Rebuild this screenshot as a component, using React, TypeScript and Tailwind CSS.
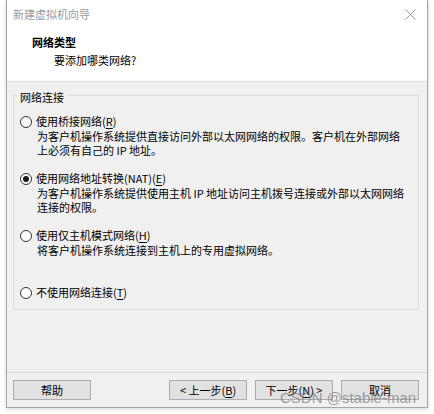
const font = { fontFamily: '"Noto Sans CJK SC", "Noto Sans", sans-serif' }

function Radio({ checked }: { checked?: boolean }) {
  return (
    <span className="flex h-[12px] w-[12px] shrink-0 items-center justify-center rounded-full border border-[#333] bg-white">
      {checked && <span className="h-[6px] w-[6px] rounded-full bg-[#1a1a1a]" />}
    </span>
  )
}

function Option({
  label,
  keyChar,
  prefix = '',
  checked,
  desc,
  className = '',
}: {
  label: string
  keyChar: string
  prefix?: string
  checked?: boolean
  desc?: string[]
  className?: string
}) {
  return (
    <div className={className}>
      <div className="flex h-[15px] items-center pl-[6px]">
        <Radio checked={checked} />
        <span className="ml-[4px] leading-[15px]">
          {label}
          {prefix}(<span className="underline underline-offset-2">{keyChar}</span>)
        </span>
      </div>
      {desc && (
        <div className="pl-[23px] leading-[14px]">
          {desc.map((d) => (
            <div key={d}>{d}</div>
          ))}
        </div>
      )}
    </div>
  )
}

function Button({ children }: { children: React.ReactNode }) {
  return (
    <button className="flex h-[20px] w-[78px] items-center justify-center border border-[#adadad] bg-[#e1e1e1] text-[11px] leading-none text-black">
      {children}
    </button>
  )
}

export default function App() {
  return (
    <div className="relative h-[414px] w-[434px] overflow-hidden bg-white text-[11px] text-black" style={font}>
      <div className="ml-[6px] flex h-[408px] w-[422px] flex-col border-x border-b border-[#a6a6a6] shadow-[0_1px_4px_rgba(0,0,0,0.18)]">
        {/* header */}
        <div className="h-[82px] border-b border-[#dcdcdc] bg-white">
          <div className="flex h-[22px] items-start justify-between pl-[6px] pr-[11px] pt-[6px]">
            <span className="leading-[16px] text-[#9a9a9a]">新建虚拟机向导</span>
            <svg width="11" height="11" viewBox="0 0 11 11" className="mt-[3px]">
              <path d="M0.5 0.5 L10.5 10.5 M10.5 0.5 L0.5 10.5" stroke="#a0a0a0" strokeWidth="1" />
            </svg>
          </div>
          <div className="ml-[25px] mt-[12px] font-bold leading-[16px]">网络类型</div>
          <div className="ml-[47px] mt-[2px] leading-[16px]">要添加哪类网络?</div>
        </div>

        {/* body */}
        <div className="flex flex-1 flex-col bg-[#f0f0f0]">
          <div className="relative ml-[6px] mr-[8px] mt-[13px] h-[215px] border border-[#dcdcdc]">
            <span className="absolute left-[3px] top-[-7px] bg-[#f0f0f0] px-[3px] leading-[16px]">网络连接</span>
            <Option
              className="mt-[18px]"
              label="使用桥接网络"
              keyChar="R"
              desc={['为客户机操作系统提供直接访问外部以太网网络的权限。客户机在外部网络', '上必须有自己的 IP 地址。']}
            />
            <Option
              className="mt-[14px]"
              label="使用网络地址转换"
              prefix="(NAT)"
              keyChar="E"
              checked
              desc={['为客户机操作系统提供使用主机 IP 地址访问主机拨号连接或外部以太网网络', '连接的权限。']}
            />
            <Option
              className="mt-[14px]"
              label="使用仅主机模式网络"
              keyChar="H"
              desc={['将客户机操作系统连接到主机上的专用虚拟网络。']}
            />
            <Option className="mt-[28px]" label="不使用网络连接" keyChar="T" />
          </div>

          {/* footer */}
          <div className="mt-auto flex items-center border-t border-[#d9d9d9] pb-[7px] pl-[6px] pr-[8px] pt-[7px]">
            <Button>帮助</Button>
            <div className="ml-auto flex gap-[8px]">
              <Button>
                &lt; 上一步(<span className="underline underline-offset-2">B</span>)
              </Button>
              <Button>
                下一步(<span className="underline underline-offset-2">N</span>) &gt;
              </Button>
              <Button>取消</Button>
            </div>
          </div>
        </div>
      </div>

      {/* watermark */}
      <span
        className="pointer-events-none absolute left-[280px] top-[389px] text-[15px] leading-[18px] text-[rgba(120,120,120,0.7)]"
        style={{ fontFamily: '"Liberation Sans", Arial, sans-serif' }}
      >
        CSDN @stable-man
      </span>
    </div>
  )
}
